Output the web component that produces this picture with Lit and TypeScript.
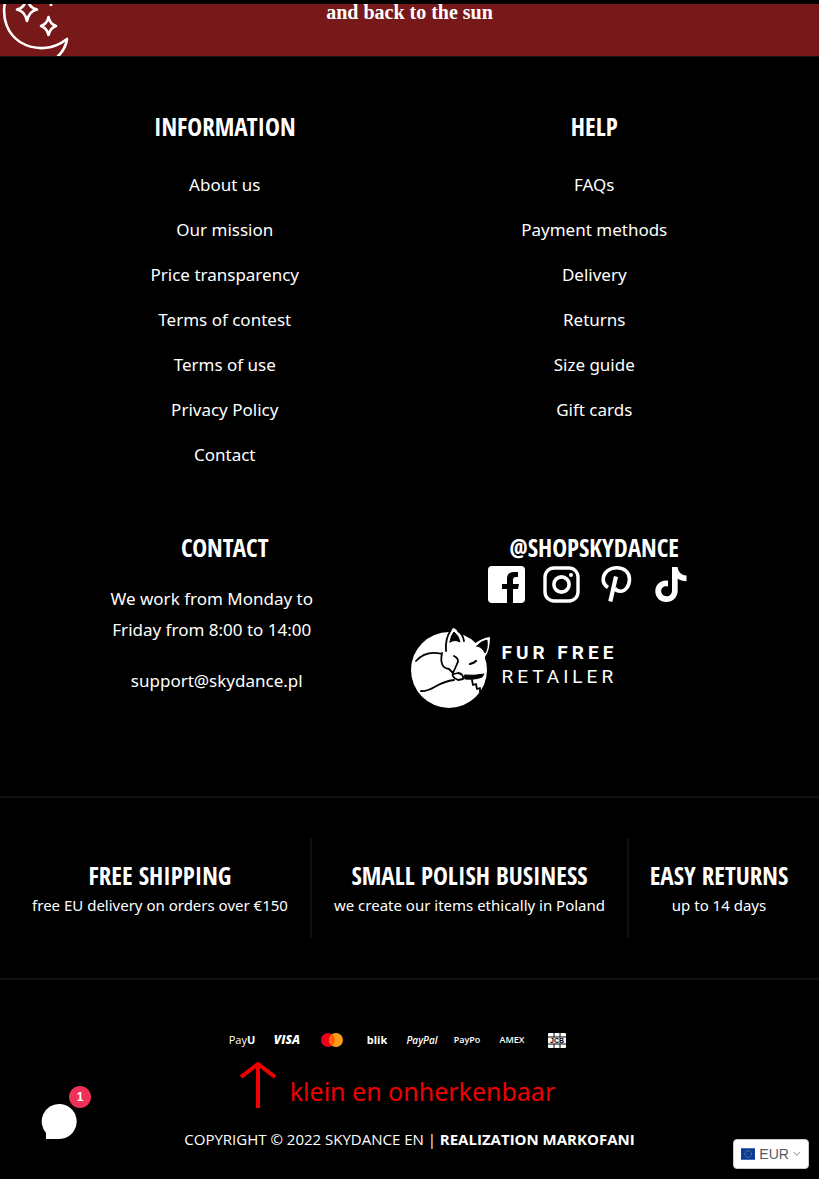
import { LitElement, html, css, svg } from "lit";
import { customElement } from "lit/decorators.js";

const information = [
  "About us",
  "Our mission",
  "Price transparency",
  "Terms of contest",
  "Terms of use",
  "Privacy Policy",
  "Contact",
];
const help = ["FAQs", "Payment methods", "Delivery", "Returns", "Size guide", "Gift cards"];

const benefits = [
  { title: "FREE SHIPPING", text: "free EU delivery on orders over €150" },
  { title: "SMALL POLISH BUSINESS", text: "we create our items ethically in Poland" },
  { title: "EASY RETURNS", text: "up to 14 days" },
];

const socials = [
  {
    name: "Facebook",
    shape: svg`<path fill-rule="evenodd" d="M4 0H33Q37 0 37 4V33Q37 37 33 37H25V23H30L31 18H25V14Q25 11 28 11H30V6H26Q19 6 19 13V18H14V23H19V37H4Q0 37 0 33V4Q0 0 4 0Z" fill="#fff"/>`,
  },
  {
    name: "Instagram",
    shape: svg`<rect x="2" y="2" width="33" height="33" rx="9" fill="none" stroke="#fff" stroke-width="3.4"/><circle cx="18.5" cy="18.5" r="7.6" fill="none" stroke="#fff" stroke-width="3.6"/><circle cx="28" cy="9" r="2" fill="#fff"/>`,
  },
  {
    name: "Pinterest",
    shape: svg`<path d="M10 21.5C6.200 19 4.600 15.500 5.400 11.500C6.500 5.500 12 1.800 19 1.800C26.500 1.800 31.500 6.600 31.500 13C31.500 20 27.500 25.200 22.500 25.200C19.500 25.200 17.500 23.800 16.800 22" fill="none" stroke="#fff" stroke-width="3.600"/><path d="M18 10.500L12.300 35.500" stroke="#fff" stroke-width="4.200" fill="none"/>`,
  },
  {
    name: "TikTok",
    shape: svg`<path d="M19 1H24.600C25 6 28.500 9 33.500 9.500V15.200C30 15.200 27 14.200 24.700 12.500V24.500C24.700 31.500 19.500 36 13.300 36C7 36 2.300 31.300 2.300 25.200C2.300 18.500 8 13.800 15 14.700V20.500C11.300 19.600 8.200 21.700 8.200 25.100C8.200 28.200 10.500 30.300 13.300 30.300C16.700 30.300 19 28 19 24.500Z" fill="#fff"/>`,
  },
];

@customElement("app-root")
export class AppRoot extends LitElement {
  static styles = css`
    :host {
      display: block;
      position: relative;
      box-sizing: border-box;
      min-height: 100vh;
      padding: 0 2px 2px 0;
      background: #fff;
      color: #fff;
      font-family: "Noto Sans", "Open Sans", sans-serif;
      font-size: 17px;
    }
    * {
      box-sizing: border-box;
    }
    a {
      color: inherit;
      text-decoration: none;
    }
    ul,
    h2,
    p {
      margin: 0;
      padding: 0;
      list-style: none;
      font-weight: 400;
    }
    svg {
      display: block;
    }
    .page {
      background: #000;
    }
    .banner {
      position: relative;
      height: 57px;
      overflow: hidden;
      border-top: 4px solid #000;
      border-bottom: 1px solid #161616;
      background: #781919;
      text-align: center;
    }
    .banner p {
      font-family: "Liberation Serif", serif;
      font-weight: 700;
      font-size: 20px;
      line-height: 16px;
    }
    .moon {
      position: absolute;
      left: 0;
      top: 0;
    }
    .columns {
      display: grid;
      grid-template-columns: 1fr 1fr;
      row-gap: 54px;
      padding: 53px 40px 87px;
      text-align: center;
    }
    h2 {
      font-family: "Open Sans Condensed", "Liberation Sans Narrow", "Open Sans", sans-serif;
      font-weight: 700;
      font-size: 25px;
      line-height: 32px;
      white-space: nowrap;
    }
    .links {
      margin-top: 20px;
      line-height: 45px;
    }
    .contact p {
      margin-top: 20px;
      padding-right: 26px;
      line-height: 31px;
    }
    .contact p + p {
      padding-right: 16px;
    }
    .socials {
      display: flex;
      justify-content: center;
      gap: 18px;
      padding: 3px 10px 0 0;
    }
    .fur {
      display: flex;
      align-items: center;
      gap: 12px;
      margin-top: 24px;
    }
    .wordmark {
      display: grid;
      gap: 2px;
      padding-bottom: 6px;
      font-family: Roboto, sans-serif;
      font-size: 19px;
      line-height: 22px;
      letter-spacing: 4px;
      text-align: left;
    }
    .benefits {
      display: grid;
      grid-template-columns: 302fr 317fr 180fr;
      padding: 40px 10px;
      border-top: 2px solid #101010;
      border-bottom: 2px solid #101010;
      text-align: center;
      font-size: 15px;
      line-height: 24px;
    }
    .benefits div {
      display: flex;
      flex-direction: column;
      justify-content: center;
      gap: 2px;
      height: 100px;
      border-right: 2px solid #101010;
      white-space: nowrap;
    }
    .benefits div:last-child {
      border-right: 0;
    }
    .bottom {
      padding: 50px 0 28px;
      font-family: "Open Sans", sans-serif;
      text-align: center;
    }
    .payments {
      display: grid;
      grid-template-columns: repeat(8, 45px);
      justify-content: center;
      align-items: center;
      justify-items: center;
      height: 20px;
      padding-right: 20px;
      font-size: 11px;
      line-height: 20px;
      white-space: nowrap;
    }
    .visa {
      font-size: 12px;
      font-weight: 800;
      font-style: italic;
    }
    .blik {
      font-size: 11px;
      font-weight: 700;
    }
    .paypal {
      font-size: 10px;
      font-style: italic;
      font-weight: 600;
    }
    .small {
      font-size: 9px;
      font-weight: 600;
    }
    .note {
      display: flex;
      justify-content: center;
      align-items: center;
      gap: 14px;
      height: 46px;
      margin: 12px 0 19px;
      padding-right: 24px;
      color: #f00000;
      font-family: "Noto Sans", sans-serif;
      font-size: 25px;
      line-height: 32px;
    }
    .note p {
      padding-top: 12px;
    }
    .copyright {
      font-size: 15px;
      line-height: 24px;
    }
    .chat {
      position: absolute;
      left: 40px;
      bottom: 41px;
      padding: 0;
      border: 0;
      background: none;
    }
    .badge {
      position: absolute;
      left: 29px;
      top: -17px;
      width: 22px;
      height: 22px;
      border-radius: 50%;
      background: #ee3157;
      color: #fff;
      font: 700 12px/22px "Liberation Sans", sans-serif;
    }
    .currency {
      position: absolute;
      right: 12px;
      bottom: 12px;
      display: flex;
      align-items: center;
      gap: 4px;
      width: 76px;
      height: 30px;
      padding: 0 7px;
      border: 1px solid #ccc;
      border-radius: 4px;
      background: #fff;
    }
    .currency select {
      appearance: none;
      width: 30px;
      padding: 0;
      border: 0;
      background: none;
      color: #555b66;
      font: 14px/20px "Liberation Sans", sans-serif;
    }
  `;

  private linkList(title: string, items: string[]) {
    return html`<section>
      <h2>${title}</h2>
      <ul class="links">
        ${items.map((t) => html`<li><a href="#">${t}</a></li>`)}
      </ul>
    </section>`;
  }

  render() {
    return html`<div class="page">
        <header class="banner">
          <svg class="moon" width="74" height="54" viewBox="0 4 74 54" fill="none" stroke="#fff" stroke-width="2.6" stroke-linejoin="round">
            <path d="M5.500 0C1 19 8 34 20 42C35 51 53 50 67 39C66 47 61 55 52 61" />
            <path d="M27 -3Q28.500 8 37 9.500Q29 11 27 21Q25 11 17 9.500Q25 8 27 -3Z" />
            <path d="M48.500 17Q50 24 56 26Q50 28 48.500 35Q47 28 41 26Q47 24 48.500 17Z" />
            <path d="M51 2V6" />
          </svg>
          <p>and back to the sun</p>
        </header>
        <main class="columns">
          ${this.linkList("INFORMATION", information)} ${this.linkList("HELP", help)}
          <section class="contact">
            <h2>CONTACT</h2>
            <p>We work from Monday to<br />Friday from 8:00 to 14:00</p>
            <p><a href="#">support@skydance.pl</a></p>
          </section>
          <section>
            <h2>@SHOPSKYDANCE</h2>
            <div class="socials">
              ${socials.map(
                (s) => html`<a href="#" aria-label=${s.name}><svg width="37" height="37" viewBox="0 0 37 37">${s.shape}</svg></a>`
              )}
            </div>
            <a class="fur" href="#">
              <svg width="80" height="82" viewBox="409 627 80 82" fill="none" stroke="#000" stroke-width="1.800" stroke-linecap="round" stroke-linejoin="round">
                <circle cx="448" cy="670" r="38" fill="#fff" stroke="none" />
                <path d="M445 652L447 636Q449 629 453 628Q460 633 463 640L473 644Q481 638 489 637Q489 650 484 657L482 672Q475 678 466 679L454 678Z" fill="#fff" stroke="none" />
                <path d="M445 651Q444 638 450 630M463 641Q462 634 457 631" />
                <path d="M449 642Q450 635 453 632Q458 636 459 642Q454 639 449 642ZM476 646Q480 641 486 640Q487 649 484 653Q481 647 476 646Z" fill="#000" stroke-width="1" />
                <path d="M415 661Q425 650 441 654M441 653Q438 668 448 669L452 673M453 656Q459 659 456 664L452 673Q450 677 457 680L462 679Q463 674 457 673L453 674M453 680C435 682 432 692 420 691" />
                <path d="M469 664Q473 663 475 661" stroke-width="2.200" />
                <path d="M464 675Q473 676 483 674L481 677Q474 680 464 679Z" fill="#000" stroke-width="1" />
                <path d="M471 680L472 685L475 684L476 689L479 688V692L483 691" />
              </svg>
              <span class="wordmark"><strong>FUR FREE</strong><span>RETAILER</span></span>
            </a>
          </section>
        </main>
        <section class="benefits">
          ${benefits.map((b) => html`<div><h2>${b.title}</h2><p>${b.text}</p></div>`)}
        </section>
        <footer class="bottom">
          <ul class="payments">
            <li>Pay<b>U</b></li>
            <li class="visa">VISA</li>
            <li>
              <svg width="24" height="16" viewBox="0 0 24 16" role="img" aria-label="Mastercard">
                <circle cx="8" cy="8" r="7" fill="#e8001c" />
                <circle cx="16" cy="8" r="7" fill="#f79e1b" />
                <path d="M12 2.300A7 7 0 0 1 12 13.700A7 7 0 0 1 12 2.300Z" fill="#ff5f00" />
              </svg>
            </li>
            <li class="blik">blik</li>
            <li class="paypal">PayPal</li>
            <li class="small">PayPo</li>
            <li class="small">AMEX</li>
            <li>
              <svg width="18" height="15" viewBox="0 0 18 15" role="img" aria-label="JCB">
                <rect width="18" height="15" rx="1" fill="#fff" />
                <path d="M6 0V4M12 0V4M6 11V15M12 11V15M0 4H18M0 11H18" stroke="#000" />
                <text x="9" y="10" text-anchor="middle" font-size="7" font-weight="700" font-family="Liberation Sans">JCB</text>
              </svg>
            </li>
          </ul>
          <div class="note">
            <svg width="36" height="46" viewBox="0 0 36 46" fill="none" stroke="#f00000" stroke-width="4"><path d="M18 46V2M1 15L18 2L35 15" /></svg>
            <p>klein en onherkenbaar</p>
          </div>
          <p class="copyright">COPYRIGHT © 2022 SKYDANCE EN | <a href="#"><b>REALIZATION MARKOFANI</b></a></p>
        </footer>
      </div>
      <button class="chat" aria-label="Chat">
        <svg width="38" height="37" viewBox="0 0 38 37"><path d="M19 1A17.500 17.500 0 0 1 25 35Q22 36 18 36H6V30A17.500 17.500 0 0 1 19 1Z" fill="#fff" /></svg>
        <span class="badge">1</span>
      </button>
      <label class="currency">
        <svg width="15" height="12" viewBox="0 0 15 12"><rect width="15" height="12" fill="#0a3a96" /><circle cx="7.500" cy="6" r="3.500" fill="none" stroke="#9aa35a" stroke-dasharray="1 0.830" /></svg>
        <select aria-label="Currency"><option>EUR</option></select>
        <svg width="8" height="6" viewBox="0 0 8 6" fill="none" stroke="#888"><path d="M1 1L4 4.500L7 1" /></svg>
      </label>`;
  }
}
